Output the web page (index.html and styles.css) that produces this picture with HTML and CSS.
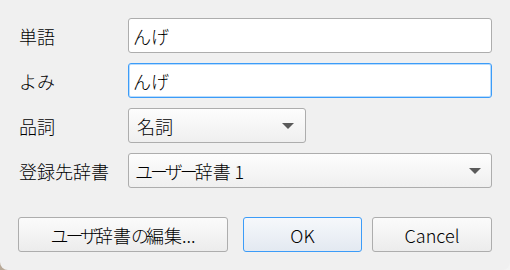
FILE: index.html
```html
<!DOCTYPE html>
<html lang="ja">
<head>
<meta charset="utf-8">
<title>単語登録</title>
<link rel="stylesheet" href="styles.css">
</head>
<body>
<div class="window">
  <div class="form">
    <div class="label">単語</div>
    <div class="field"><div class="input">んげ</div></div>
    <div class="label">よみ</div>
    <div class="field"><div class="input focused">んげ</div></div>
    <div class="label">品詞</div>
    <div class="field"><div class="combo short"><span>名詞</span><svg class="arrow" width="12" height="6" viewBox="0 0 12 6"><polygon points="0,0 12,0 6,6" fill="#5a5a5a"/></svg></div></div>
    <div class="label">登録先辞書</div>
    <div class="field"><div class="combo"><span><span class="k">ユーザー</span>辞書 1</span><svg class="arrow" width="12" height="6" viewBox="0 0 12 6"><polygon points="0,0 12,0 6,6" fill="#5a5a5a"/></svg></div></div>
  </div>
  <div class="buttons">
    <div class="btn edit"><span><span class="k">ユーザ</span>辞書<span class="k">の</span>編集...</span></div>
    <div class="btn ok">OK</div>
    <div class="btn cancel">Cancel</div>
  </div>
</div>
</body>
</html>
```

FILE: styles.css
```css
html {
  margin: 0;
  background: linear-gradient(to right, #b8a998 0%, #d8d2cc 40%, #f4f4f4 100%);
}
body {
  margin: 0;
  width: 510px;
  height: 270px;
  overflow: hidden;
  font-family: "Noto Sans CJK JP", "Noto Sans", sans-serif;
  font-size: 18px;
  font-weight: 300;
  color: #000;
}
.k {
  letter-spacing: -3px;
}
.window {
  box-sizing: border-box;
  width: 510px;
  height: 270px;
  background: #f0f0f0;
  border-radius: 0 0 8px 8px;
  padding: 18px 18px 0 18px;
}
.form {
  display: grid;
  grid-template-columns: 110px 1fr;
  grid-auto-rows: 35px;
  row-gap: 10px;
  align-items: center;
}
.label {
  line-height: 20px;
  padding-left: 1px;
}
.field {
  height: 35px;
  display: flex;
}
.input {
  box-sizing: border-box;
  flex: 1;
  height: 35px;
  background: #fff;
  border: 1px solid #adadad;
  border-radius: 3px;
  padding: 0 4px;
  display: flex;
  align-items: center;
  line-height: 20px;
}
.input.focused {
  border-color: #3c9cf8;
  box-shadow: inset 0 0 0 1px #b9dcfd;
}
.combo {
  box-sizing: border-box;
  flex: 1;
  height: 35px;
  border: 1px solid #adadad;
  border-radius: 3px;
  background: linear-gradient(to bottom, #fdfdfd, #efefef);
  padding: 0 10px 0 6px;
  display: flex;
  align-items: center;
  justify-content: space-between;
  line-height: 20px;
}
.combo.short {
  flex: 0 0 178px;
  padding-left: 8px;
}
.arrow {
  display: block;
  flex: none;
}
.combo.short .arrow {
  margin-right: 1px;
}
.buttons {
  display: flex;
  margin-top: 29px;
  height: 35px;
}
.btn {
  box-sizing: border-box;
  height: 35px;
  border: 1px solid #adadad;
  border-radius: 3px;
  background: linear-gradient(to bottom, #fbfbfb, #ececec);
  display: flex;
  align-items: center;
  justify-content: center;
  line-height: 20px;
}
.btn.edit {
  width: 210px;
  margin-right: 15px;
}
.btn.ok {
  width: 119px;
  margin-right: 10px;
  border-color: #3c9cf8;
  background: linear-gradient(to bottom, #f6f8fb, #e3e9f1);
}
.btn.cancel {
  width: 120px;
}
```
